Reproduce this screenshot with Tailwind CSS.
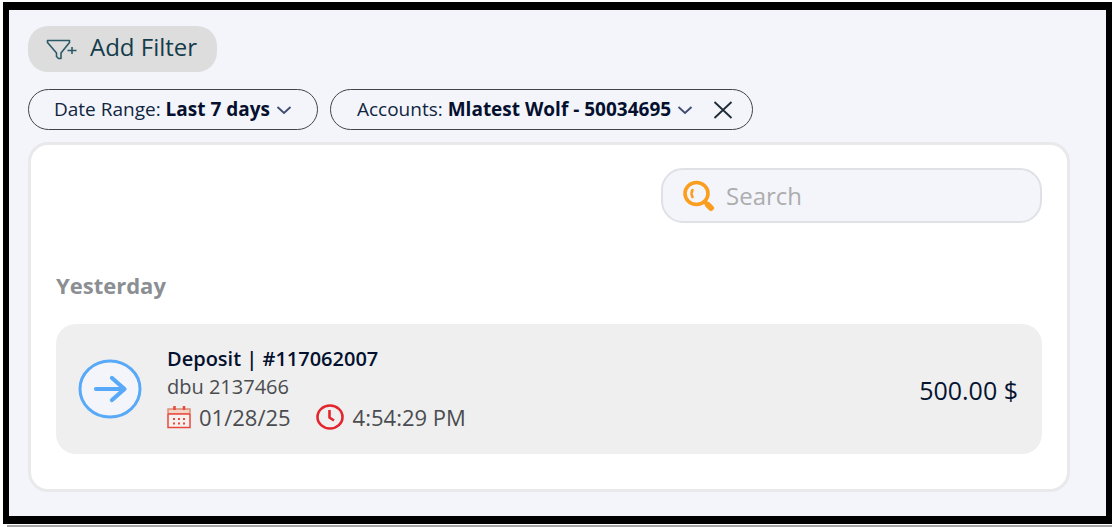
<!DOCTYPE html>
<html lang="en">
  <head>
    <meta charset="UTF-8" />
    <meta name="viewport" content="width=device-width, initial-scale=1.0" />
    <title>Transactions</title>
    <script src="https://cdn.jsdelivr.net/npm/@tailwindcss/browser@4"></script>
  </head>
  <body class="bg-white flex flex-col min-h-screen pt-[2px] pl-[3px] font-['Open_Sans',sans-serif]">
    <main class="flex-1 bg-[#f4f5fb] border-x-6 border-y-8 border-black pt-4 pb-6 pl-[19px] pr-9">
      <button type="button" class="flex items-center h-[46px] pl-[18px] pr-5 pb-1 rounded-[20px] bg-[#dddddd] text-[#143c4b] text-2xl">
        <svg class="w-8 h-6 mt-1 mr-3" viewBox="0 0 32 24" fill="none" stroke="#2b5a66" stroke-width="1.600" stroke-linejoin="round">
          <path d="M1.500 3.500H23.500V5.500L15 16V21.500H12.500L10.500 19.500V16L1.500 5.500Z" />
          <path d="M21.500 13.500H30.500M26 10V17" />
        </svg>
        Add Filter
      </button>

      <div class="flex gap-3 mt-[17px]">
        <button type="button" class="flex items-center h-[41px] px-[25px] rounded-full border border-[#3f4448] text-[19px] text-[#10263f]">
          <span>Date Range: <b class="text-[#04102e]">Last 7 days</b></span>
          <svg class="w-4 h-4 ml-[6px]" viewBox="0 0 16 16" fill="none" stroke="#3f4a70" stroke-width="1.800">
            <path d="M1.500 5L8 11L14.500 5" />
          </svg>
        </button>
        <div class="flex items-center h-[41px] pl-[26px] pr-[19px] rounded-full border border-[#3f4448] text-[19px] text-[#10263f]">
          <button type="button" class="flex items-center">
            <span>Accounts: <b class="text-[#04102e]">Mlatest Wolf - 50034695</b></span>
            <svg class="w-4 h-4 ml-[6px]" viewBox="0 0 16 16" fill="none" stroke="#3f4a70" stroke-width="1.800">
              <path d="M1.500 5L8 11L14.500 5" />
            </svg>
          </button>
          <button type="button" aria-label="Remove accounts filter" class="ml-5">
            <svg class="w-5 h-5" viewBox="0 0 20 20" fill="none" stroke="#1d2b36" stroke-width="1.800">
              <path d="M1.500 2L18.500 18M18.500 2L1.500 18" />
            </svg>
          </button>
        </div>
      </div>

      <section class="mt-3 rounded-[20px] border-3 border-[#e9e9eb] bg-white pt-[23px] pb-[35px] px-[25px]">
        <label class="flex items-center w-[381px] h-[55px] ml-auto pl-5 pr-4 rounded-[22px] border-2 border-[#dfe1e6] bg-[#f4f5fb]">
          <svg class="w-8 h-8 mr-[11px] shrink-0" viewBox="0 0 32 32" fill="none" stroke="#fb9d1e" stroke-linecap="round">
            <ellipse cx="13.500" cy="13.500" rx="11.500" ry="11" stroke-width="3.600" />
            <path d="M9.500 10Q7.500 13.500 9.500 17" stroke-width="2.600" />
            <path d="M21.500 21.500L24 24" stroke-width="4" />
            <path d="M25 25L28 28" stroke-width="6" />
          </svg>
          <input type="search" placeholder="Search" aria-label="Search" class="w-full bg-transparent text-2xl text-[#444a52] placeholder:text-[#adadad] outline-none" />
        </label>

        <h2 class="mt-[46px] text-[22px] leading-8 font-bold text-[#8b8f94]">Yesterday</h2>

        <article class="flex items-center mt-[23px] h-[130px] pl-[22px] pr-6 rounded-[20px] bg-[#efefef]">
          <svg class="w-16 h-16 mr-[25px] shrink-0" viewBox="0 0 64 64" fill="none" stroke="#58a9f8" stroke-linecap="round" stroke-linejoin="round">
            <ellipse cx="32" cy="32" rx="30" ry="28" fill="#f4f5fb" stroke-width="3" />
            <path d="M18 32H46M34 21L46.500 32L34 43" stroke-width="4.200" />
          </svg>
          <div class="text-[22px] text-[#4a4c50]">
            <h3 class="text-xl leading-7 font-semibold text-[#04102e]">Deposit | #117062007</h3>
            <p class="text-xl leading-7">dbu 2137466</p>
            <div class="flex items-center h-8">
              <svg class="w-6 h-6 mr-2" viewBox="0 0 24 24" fill="none" stroke="#e8483e" stroke-width="1.500">
                <path d="M1 4H23V9H1Z" fill="#f3d3c3" stroke="#dc8f78" />
                <path d="M1 9V22.500H23V9" fill="#f6f0ef" />
                <path d="M1 9H23" />
                <path d="M7.500 1V5M17 1V5" stroke-width="2.500" />
                <path d="M6 14H18M6 18.500H18" stroke-width="2" stroke-dasharray="2 3" />
              </svg>
              <span>01/28/25</span>
              <svg class="w-7 h-7 ml-[25px] mr-[9px]" viewBox="0 0 28 28" fill="none" stroke="#e3262d" stroke-width="2.600">
                <ellipse cx="14" cy="14" rx="12.500" ry="11.500" />
                <path d="M13.500 7V14.500L18 17.500" />
              </svg>
              <span>4:54:29 PM</span>
            </div>
          </div>
          <p class="ml-auto pt-1 text-[25px] text-[#06142f]">500.00 $</p>
        </article>
      </section>
    </main>
    <div class="ml-1 h-[3px] border-t border-white bg-[#a5a5a5]"></div>
  </body>
</html>
